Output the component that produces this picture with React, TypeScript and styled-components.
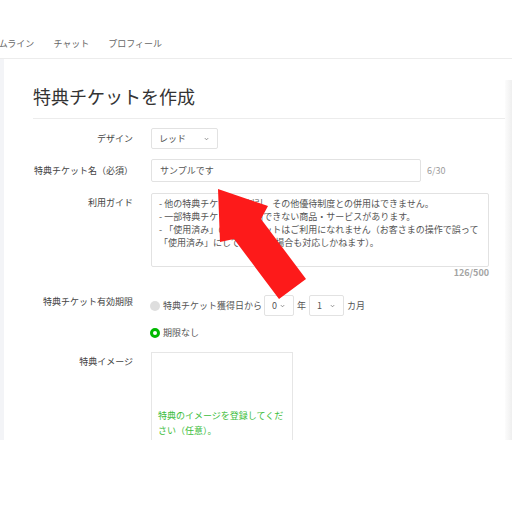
import styled, { createGlobalStyle } from 'styled-components';

const GlobalStyle = createGlobalStyle`
  html, body {
    margin: 0;
    padding: 0;
    background: #fff;
  }
  body {
    font-family: "Noto Sans CJK JP", "Noto Sans", sans-serif;
    color: #333;
  }
`;

const Stage = styled.div`
  position: relative;
  width: 512px;
  height: 512px;
  padding-top: 30px;
  box-sizing: border-box;
  overflow: hidden;
`;

const Frame = styled.div`
  height: 410px;
  display: flex;
  flex-direction: column;
  overflow: hidden;
`;

const Nav = styled.div`
  height: 28px;
  flex-shrink: 0;
  display: flex;
  align-items: center;
  gap: 19px;
  margin-left: -19px;
  border-bottom: 1px solid #ececec;
`;

const NavItem = styled.span`
  font-size: 9px;
  line-height: 12px;
  color: #666;
  white-space: nowrap;
`;

const Body = styled.div`
  flex: 1;
  display: flex;
  min-height: 0;
`;

const LeftStrip = styled.div`
  width: 4px;
  background: #f3f4f7;
`;

const RightStrip = styled.div`
  width: 7px;
  margin-top: 21px;
  background: linear-gradient(to right, #fcfcfc, #efefef);
`;

const Main = styled.div`
  flex: 1;
  padding-left: 29px;
  background: #fff;
`;

const Title = styled.h1`
  margin: 24px 0 0;
  padding-bottom: 9px;
  font-size: 18px;
  line-height: 26px;
  font-weight: 400;
  color: #333;
  border-bottom: 1px solid #ececec;
`;

const Form = styled.div`
  padding-top: 9px;
  display: flex;
  flex-direction: column;
`;

const Row = styled.div<{ $center?: boolean; $gapAfter: number }>`
  display: flex;
  align-items: ${(p) => (p.$center ? 'center' : 'flex-start')};
  gap: 18px;
  margin-bottom: ${(p) => p.$gapAfter}px;
`;

const Label = styled.div<{ $top?: number }>`
  width: 100px;
  flex-shrink: 0;
  text-align: right;
  font-size: 9px;
  line-height: 13px;
  color: #444;
  padding-top: ${(p) => p.$top ?? 0}px;
  white-space: nowrap;
`;

const Field = styled.div`
  display: flex;
  flex-direction: column;
`;

const Inline = styled.div`
  display: flex;
  align-items: center;
`;

const SelectBox = styled.div<{ $w: number }>`
  width: ${(p) => p.$w}px;
  height: 21px;
  box-sizing: border-box;
  border: 1px solid #e2e2e2;
  border-radius: 2px;
  display: flex;
  align-items: center;
  justify-content: space-between;
  padding: 0 8px 0 7px;
  font-size: 9px;
  color: #555;
  background: #fff;
`;

const TextInput = styled.div`
  width: 270px;
  height: 23px;
  box-sizing: border-box;
  border: 1px solid #e2e2e2;
  border-radius: 2px;
  padding-left: 8px;
  display: flex;
  align-items: center;
  font-size: 9px;
  color: #555;
`;

const Counter = styled.span<{ $strong?: boolean }>`
  font-size: 9px;
  line-height: 12px;
  color: ${(p) => (p.$strong ? '#a4a4a4' : '#9c9c9c')};
  font-weight: ${(p) => (p.$strong ? 700 : 400)};
`;

const NameCounter = styled(Counter)`
  margin-left: 6px;
`;

const GuideCounter = styled(Counter)`
  align-self: flex-end;
`;

const TextArea = styled.div`
  width: 338px;
  height: 74px;
  box-sizing: border-box;
  border: 1px solid #e2e2e2;
  border-radius: 2px;
  padding: 3px 7px;
  font-size: 9px;
  line-height: 13px;
  color: #555;
`;

const TextLine = styled.div`
  white-space: nowrap;
`;

const Radio = styled.span<{ $on?: boolean }>`
  width: 10px;
  height: 10px;
  box-sizing: border-box;
  border-radius: 50%;
  flex-shrink: 0;
  background: ${(p) => (p.$on ? '#fff' : '#dedede')};
  border: ${(p) => (p.$on ? '3px solid #00b900' : 'none')};
  margin: 0 3px 0 -1px;
`;

const OptionText = styled.span<{ $gap?: number }>`
  font-size: 9px;
  line-height: 13px;
  color: #555;
  margin: 0 ${(p) => p.$gap ?? 2}px;
  white-space: nowrap;
`;

const SecondOption = styled(Inline)`
  margin-top: 10px;
  height: 13px;
`;

const ImageBox = styled.div`
  width: 142px;
  height: 110px;
  box-sizing: border-box;
  border: 1px solid #e6e6e6;
  padding: 55px 6px 0;
  font-size: 9px;
  line-height: 15px;
  color: #3dbd3d;
`;

const ArrowLayer = styled.svg`
  position: absolute;
  left: 0;
  top: 0;
  pointer-events: none;
`;

const Chevron = () => (
  <svg width="5" height="4" viewBox="0 0 5 4">
    <path d="M0.8 1.1 L2.5 2.8 L4.2 1.1" fill="none" stroke="#777" strokeWidth="0.8" />
  </svg>
);

const Select = ({ value, width }: { value: string; width: number }) => (
  <SelectBox $w={width}>
    <span>{value}</span>
    <Chevron />
  </SelectBox>
);

const guideLines = [
  '- 他の特典チケットや割引、その他優待制度との併用はできません。',
  '- 一部特典チケットが利用できない商品・サービスがあります。',
  '- 「使用済み」の特典チケットはご利用になれません（お客さまの操作で誤って',
  '「使用済み」にしてしまった場合も対応しかねます）。',
];

const App = () => {
  return (
    <Stage>
      <GlobalStyle />
      <Frame>
        <Nav>
          <NavItem>タイムライン</NavItem>
          <NavItem>チャット</NavItem>
          <NavItem>プロフィール</NavItem>
        </Nav>
        <Body>
          <LeftStrip />
          <Main>
            <Title>特典チケットを作成</Title>
            <Form>
              <Row $center $gapAfter={10}>
                <Label>デザイン</Label>
                <Select value="レッド" width={67} />
              </Row>
              <Row $center $gapAfter={11}>
                <Label>特典チケット名（必須）</Label>
                <Inline>
                  <TextInput>サンプルです</TextInput>
                  <NameCounter>6/30</NameCounter>
                </Inline>
              </Row>
              <Row $gapAfter={16}>
                <Label $top={3}>利用ガイド</Label>
                <Field>
                  <TextArea>
                    {guideLines.map((l) => (
                      <TextLine key={l}>{l}</TextLine>
                    ))}
                  </TextArea>
                  <GuideCounter $strong>126/500</GuideCounter>
                </Field>
              </Row>
              <Row $gapAfter={13}>
                <Label>特典チケット有効期限</Label>
                <Field>
                  <Inline>
                    <Radio />
                    <OptionText $gap={0}>特典チケット獲得日から</OptionText>
                    <OptionText $gap={1} />
                    <Select value="0" width={30} />
                    <OptionText $gap={3}>年</OptionText>
                    <Select value="1" width={35} />
                    <OptionText $gap={3}>カ月</OptionText>
                  </Inline>
                  <SecondOption>
                    <Radio $on />
                    <OptionText $gap={0}>期限なし</OptionText>
                  </SecondOption>
                </Field>
              </Row>
              <Row $gapAfter={0}>
                <Label $top={3}>特典イメージ</Label>
                <ImageBox>特典のイメージを登録してください（任意）。</ImageBox>
              </Row>
            </Form>
          </Main>
          <RightStrip />
        </Body>
      </Frame>
      <ArrowLayer width="512" height="512" viewBox="0 0 512 512">
        <polygon
          points="218,189 268,206 261,219 306,279 279,299 234,239 220,242"
          fill="#fd1a1a"
        />
      </ArrowLayer>
    </Stage>
  );
};

export default App;
